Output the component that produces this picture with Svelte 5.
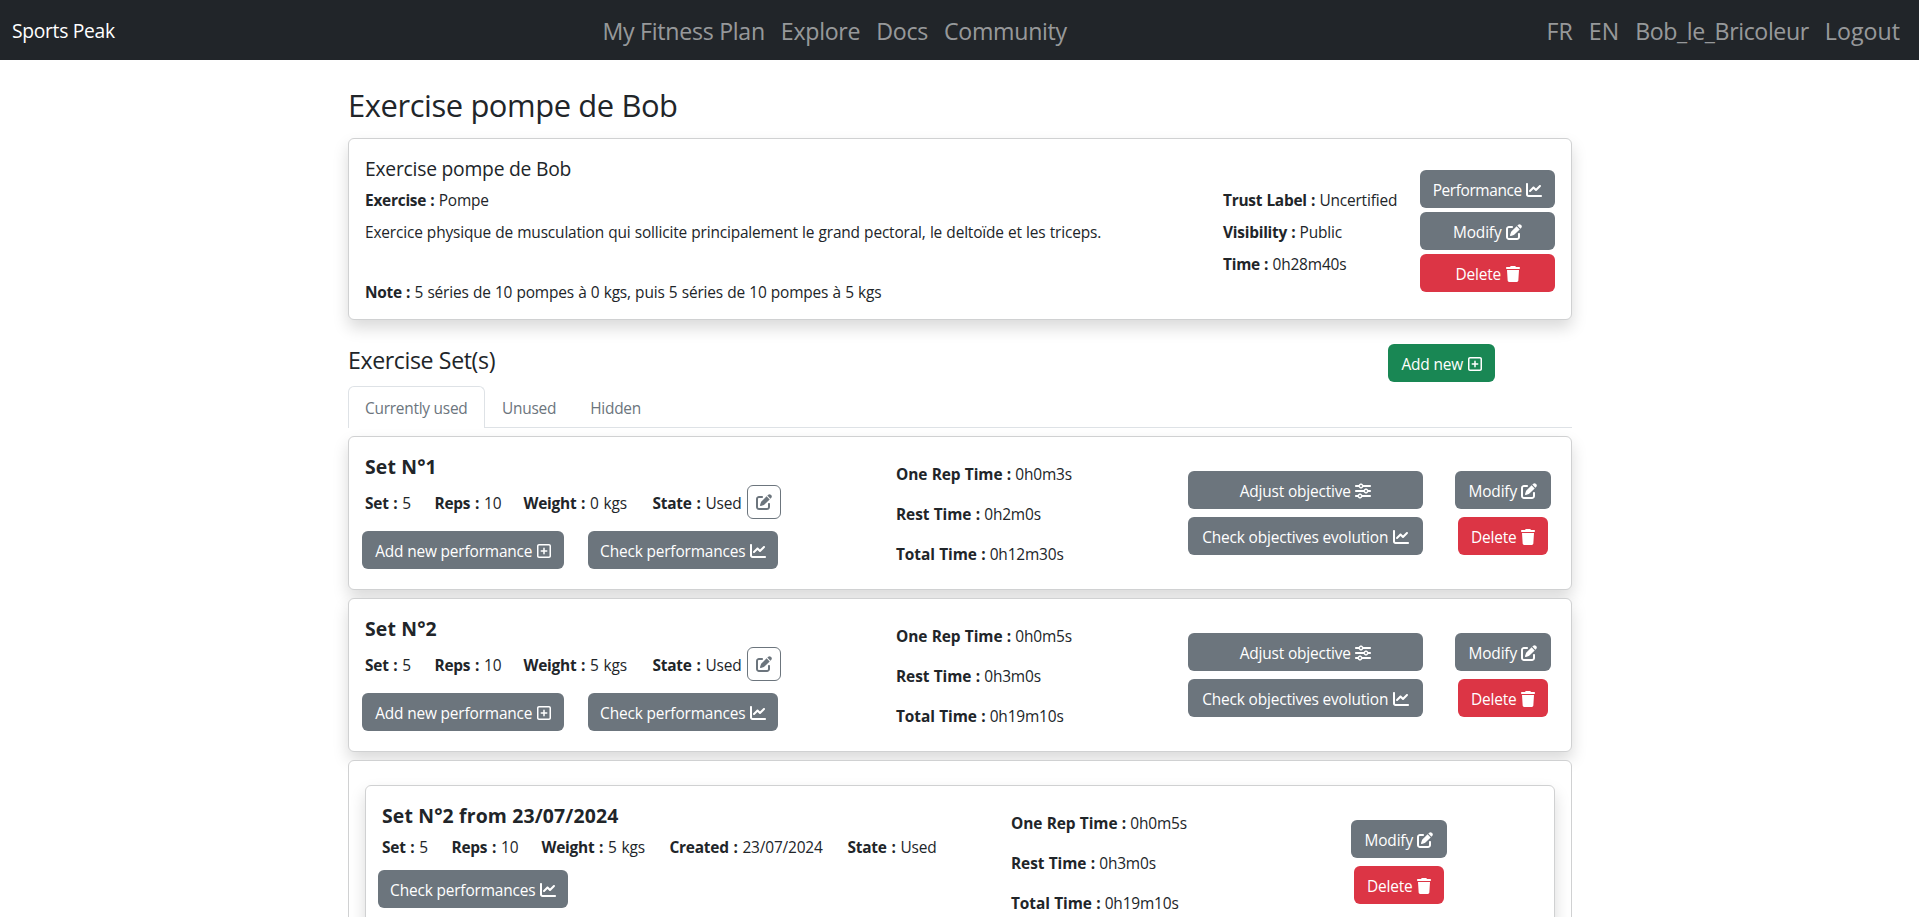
<script>
  const icons = {
    chart: { w: 512, d: 'M64 64c0-17.7-14.3-32-32-32S0 46.3 0 64V400c0 44.2 35.8 80 80 80H480c17.7 0 32-14.3 32-32s-14.3-32-32-32H80c-8.8 0-16-7.2-16-16V64zm406.6 86.6c12.5-12.5 12.5-32.8 0-45.3s-32.8-12.5-45.3 0L320 210.7l-57.4-57.4c-12.5-12.5-32.8-12.5-45.3 0l-112 112c-12.5 12.5-12.5 32.8 0 45.3s32.8 12.5 45.3 0L240 221.3l57.4 57.4c12.5 12.5 32.8 12.5 45.3 0l128-128z' },
    edit: { w: 512, d: 'M471.6 21.7c-21.9-21.9-57.3-21.9-79.2 0L362.3 51.7l97.9 97.9 30.1-30.1c21.9-21.9 21.9-57.3 0-79.2L471.6 21.7zm-299.2 220c-6.1 6.1-10.8 13.6-13.5 21.9l-29.6 88.8c-2.9 8.6-.6 18.1 5.8 24.6s15.9 8.7 24.6 5.8l88.8-29.6c8.2-2.7 15.7-7.4 21.9-13.5L437.7 172.3 339.7 74.3 172.4 241.7zM96 64C43 64 0 107 0 160V416c0 53 43 96 96 96H352c53 0 96-43 96-96V320c0-17.7-14.3-32-32-32s-32 14.3-32 32v96c0 17.7-14.3 32-32 32H96c-17.7 0-32-14.3-32-32V160c0-17.7 14.3-32 32-32h96c17.7 0 32-14.3 32-32s-14.3-32-32-32H96z' },
    trash: { w: 448, d: 'M135.2 17.7L128 32H32C14.3 32 0 46.3 0 64S14.3 96 32 96H416c17.7 0 32-14.3 32-32s-14.3-32-32-32H320l-7.2-14.3C307.4 6.8 296.3 0 284.2 0H163.8c-12.1 0-23.2 6.8-28.6 17.7zM416 128H32L53.2 467c1.6 25.3 22.6 45 47.9 45H346.9c25.3 0 46.3-19.7 47.9-45L416 128z' },
    plus: { w: 448, d: 'M64 80c-8.8 0-16 7.2-16 16V416c0 8.8 7.2 16 16 16H384c8.8 0 16-7.2 16-16V96c0-8.8-7.2-16-16-16H64zM0 96C0 60.7 28.7 32 64 32H384c35.3 0 64 28.7 64 64V416c0 35.3-28.7 64-64 64H64c-35.3 0-64-28.7-64-64V96zM200 344V280H136c-13.3 0-24-10.7-24-24s10.7-24 24-24h64V168c0-13.3 10.7-24 24-24s24 10.7 24 24v64h64c13.3 0 24 10.7 24 24s-10.7 24-24 24H248v64c0 13.3-10.7 24-24 24s-24-10.7-24-24z' },
    sliders: { w: 512, d: 'M0 416c0 17.7 14.3 32 32 32l54.7 0c12.3 28.3 40.5 48 73.3 48s61-19.7 73.3-48L480 448c17.7 0 32-14.3 32-32s-14.3-32-32-32l-246.7 0c-12.3-28.3-40.5-48-73.3-48s-61 19.7-73.3 48L32 384c-17.7 0-32 14.3-32 32zm128 0a32 32 0 1 1 64 0 32 32 0 1 1 -64 0zM320 256a32 32 0 1 1 64 0 32 32 0 1 1 -64 0zm32-80c-32.8 0-61 19.7-73.3 48L32 224c-17.7 0-32 14.3-32 32s14.3 32 32 32l246.7 0c12.3 28.3 40.5 48 73.3 48s61-19.7 73.3-48l54.7 0c17.7 0 32-14.3 32-32s-14.3-32-32-32l-54.7 0c-12.3-28.3-40.5-48-73.3-48zM192 128a32 32 0 1 1 0-64 32 32 0 1 1 0 64zm73.3-64C253 35.7 224.8 16 192 16s-61 19.7-73.3 48L32 64C14.3 64 0 78.3 0 96s14.3 32 32 32l86.7 0c12.3 28.3 40.5 48 73.3 48s61-19.7 73.3-48L480 128c17.7 0 32-14.3 32-32s-14.3-32-32-32L265.3 64z' }
  };

  const sets = [
    { title: 'Set N°1', weight: '0 kgs', rep: '0h0m3s', rest: '0h2m0s', total: '0h12m30s' },
    { title: 'Set N°2', weight: '5 kgs', rep: '0h0m5s', rest: '0h3m0s', total: '0h19m10s' }
  ];
  const past = { title: 'Set N°2 from 23/07/2024', weight: '5 kgs', rep: '0h0m5s', rest: '0h3m0s', total: '0h19m10s' };
</script>

{#snippet icon(name)}
  <svg class="icon" viewBox="0 0 {icons[name].w} 512" width={icons[name].w / 32} height="16" aria-hidden="true"><path d={icons[name].d} /></svg>
{/snippet}

{#snippet btn(label, name, kind)}
  <button type="button" class="btn {kind}"><span>{label}</span>{@render icon(name)}</button>
{/snippet}

{#snippet field(label, value)}
  <div class="field"><b>{label} :</b> {value}</div>
{/snippet}

{#snippet times(s)}
  <div class="times">
    {@render field('One Rep Time', s.rep)}
    {@render field('Rest Time', s.rest)}
    {@render field('Total Time', s.total)}
  </div>
{/snippet}

<div class="page">
  <nav class="navbar">
    <a class="brand" href="#home">Sports Peak</a>
    <div class="links">
      <a href="#plan">My Fitness Plan</a>
      <a href="#explore">Explore</a>
      <a href="#docs">Docs</a>
      <a href="#community">Community</a>
    </div>
    <div class="links account">
      <a href="#fr">FR</a>
      <a href="#en">EN</a>
      <a class="user" href="#profile">Bob_le_Bricoleur</a>
      <a href="#logout">Logout</a>
    </div>
  </nav>

  <main>
    <h1>Exercise pompe de Bob</h1>

    <section class="card summary">
      <div>
        <h5 class="light">Exercise pompe de Bob</h5>
        {@render field('Exercise', 'Pompe')}
        <div class="field description">Exercice physique de musculation qui sollicite principalement le grand pectoral, le deltoïde et les triceps.</div>
        {@render field('Note', '5 séries de 10 pompes à 0 kgs, puis 5 séries de 10 pompes à 5 kgs')}
      </div>
      <div class="labels">
        {@render field('Trust Label', 'Uncertified')}
        {@render field('Visibility', 'Public')}
        {@render field('Time', '0h28m40s')}
      </div>
      <div class="stack tight">
        {@render btn('Performance', 'chart', 'grey snug')}
        {@render btn('Modify', 'edit', 'grey')}
        {@render btn('Delete', 'trash', 'red')}
      </div>
    </section>

    <div class="sets-head">
      <h2>Exercise Set(s)</h2>
      {@render btn('Add new', 'plus', 'green')}
    </div>

    <div class="tabs">
      <a class="tab active" href="#used">Currently used</a>
      <a class="tab" href="#unused">Unused</a>
      <a class="tab" href="#hidden">Hidden</a>
    </div>

    {#each sets as s}
      <section class="card set">
        <div>
          <h5>{s.title}</h5>
          <div class="facts">
            {@render field('Set', '5')}
            {@render field('Reps', '10')}
            {@render field('Weight', s.weight)}
            {@render field('State', 'Used')}
            <button type="button" class="outline" aria-label="State">{@render icon('edit')}</button>
          </div>
          <div class="actions">
            {@render btn('Add new performance', 'plus', 'grey add')}
            {@render btn('Check performances', 'chart', 'grey check')}
          </div>
        </div>
        {@render times(s)}
        <div class="stack">
          {@render btn('Adjust objective', 'sliders', 'grey')}
          {@render btn('Check objectives evolution', 'chart', 'grey')}
        </div>
        <div class="stack manage">
          {@render btn('Modify', 'edit', 'grey modify')}
          {@render btn('Delete', 'trash', 'red delete')}
        </div>
      </section>
    {/each}

    <section class="history">
      <div class="card set past">
        <div>
          <h5>{past.title}</h5>
          <div class="facts">
            {@render field('Set', '5')}
            {@render field('Reps', '10')}
            {@render field('Weight', past.weight)}
            {@render field('Created', '23/07/2024')}
            {@render field('State', 'Used')}
          </div>
          <div class="actions">
            {@render btn('Check performances', 'chart', 'grey check')}
          </div>
        </div>
        {@render times(past)}
        <div class="stack manage">
          {@render btn('Modify', 'edit', 'grey modify')}
          {@render btn('Delete', 'trash', 'red delete')}
        </div>
      </div>
    </section>
  </main>
</div>

<style>
  :global(body) {
    margin: 0;
    background: #fff;
  }
  .page {
    height: 100vh;
    overflow: hidden;
    font: 400 15.45px/24px 'Open Sans', 'Noto Sans', sans-serif;
    letter-spacing: -0.011em;
    color: #212529;
  }
  .page *,
  .page *::before {
    box-sizing: border-box;
  }
  a {
    text-decoration: none;
    white-space: nowrap;
  }

  .navbar {
    display: flex;
    align-items: center;
    height: 60px;
    padding: 0 19px 0 12px;
    background: #212529;
  }
  .brand {
    width: 590.5px;
    padding-top: 1px;
    font-size: 19.3px;
    line-height: 30px;
    letter-spacing: -0.016em;
    color: #fff;
  }
  .links {
    display: flex;
    gap: 16px;
    padding-top: 1px;
    font-size: 23.15px;
    line-height: 36px;
    letter-spacing: -0.012em;
  }
  .links a {
    color: rgba(255, 255, 255, 0.55);
  }
  .account {
    margin-left: auto;
    letter-spacing: 0.002em;
  }
  .links .user {
    letter-spacing: -0.017em;
  }

  main {
    width: 1224px;
    margin-left: 348px;
  }
  h1,
  h2,
  h5 {
    margin: 0;
    font-weight: 400;
  }
  h1 {
    height: 78px;
    padding-top: 26px;
    font-size: 30.9px;
    line-height: 38px;
    letter-spacing: -0.013em;
  }
  h2 {
    width: 1040px;
    padding-top: 2px;
    font-size: 23.15px;
    line-height: 29px;
    letter-spacing: -0.017em;
  }
  h5 {
    height: 33px;
    padding-top: 2px;
    font-size: 19.4px;
    line-height: 24px;
    font-weight: 700;
    letter-spacing: 0.008em;
  }
  h5.light {
    font-size: 19.3px;
    font-weight: 400;
    letter-spacing: -0.012em;
  }

  .card {
    display: grid;
    align-items: start;
    padding: 16px;
    background: #fff;
    border: 1px solid #d0d1d2;
    border-radius: 6px;
    box-shadow: 0 8px 16px rgba(0, 0, 0, 0.15);
  }
  .field {
    white-space: nowrap;
    word-spacing: 0.4px;
  }
  b {
    font-weight: 700;
    letter-spacing: -0.016em;
  }

  .summary {
    grid-template-columns: 858px 197px 135px;
    height: 182px;
  }
  .summary .field {
    margin-bottom: 8px;
  }
  .summary .description {
    margin-bottom: 36px;
  }
  .labels {
    padding-top: 33px;
  }
  .summary .stack {
    padding-top: 15px;
  }

  .stack {
    display: flex;
    flex-direction: column;
    gap: 8px;
    padding-top: 18px;
  }
  .stack.tight {
    gap: 4px;
  }
  .manage {
    align-items: center;
  }

  .btn {
    display: flex;
    justify-content: center;
    align-items: center;
    gap: 4.5px;
    height: 38px;
    padding: 0;
    border: 0;
    border-radius: 6px;
    font: inherit;
    letter-spacing: -0.011em;
    white-space: nowrap;
    color: #fff;
  }
  .btn span {
    padding-top: 2px;
  }
  .btn .icon {
    margin-top: 2px;
  }
  .btn.snug {
    letter-spacing: -0.026em;
  }
  .grey {
    background: #6c757d;
  }
  .red {
    background: #dc3545;
  }
  .green {
    width: 107px;
    background: #198754;
  }
  .add {
    width: 202px;
  }
  .check {
    width: 190px;
  }
  .modify {
    width: 96px;
  }
  .delete {
    width: 90px;
  }
  .icon {
    display: block;
    flex: none;
    fill: currentColor;
  }

  .sets-head {
    display: flex;
    align-items: flex-start;
    height: 38px;
    margin: 24px 0 4px;
  }
  .tabs {
    display: flex;
    height: 42px;
    margin-bottom: 8px;
    border-bottom: 1px solid #dee2e6;
    letter-spacing: -0.016em;
  }
  .tab {
    height: 42px;
    padding: 9px 16px 0;
    border: 1px solid transparent;
    border-bottom: 0;
    border-radius: 6px 6px 0 0;
    color: #6c757d;
  }
  .tab.active {
    width: 137px;
    border-color: #dee2e6;
    background: #fff;
  }

  .set {
    grid-template-columns: 531px 292px 235px 32px 96px;
    height: 154px;
    margin-bottom: 8px;
  }
  .set .manage {
    grid-column: 5;
  }
  .facts {
    display: grid;
    grid-template-columns: 69.5px 89px 129px 94px 34px;
    align-items: center;
    height: 34px;
    margin: -1px 0 12px;
  }
  .facts .field {
    padding-top: 1px;
    word-spacing: 1px;
  }
  .outline {
    display: flex;
    align-items: center;
    justify-content: center;
    width: 34px;
    height: 34px;
    padding: 0;
    border: 1px solid #6c757d;
    border-radius: 6px;
    background: #fff;
    color: #6c757d;
  }
  .actions {
    display: flex;
    gap: 24px;
    margin-left: -3px;
  }
  .times {
    display: flex;
    flex-direction: column;
    gap: 16px;
    padding-top: 9px;
  }
  .times b {
    letter-spacing: -0.005em;
  }

  .history {
    padding: 24px 16px;
    border: 1px solid #d0d1d2;
    border-radius: 6px;
    background: #fff;
    position: relative;
  }
  .set.past {
    grid-template-columns: 629px 340px 96px;
    margin: 0;
  }
  .past .manage {
    grid-column: 3;
  }
  .past .facts {
    grid-template-columns: 69.5px 90px 128px 178px 90px;
    height: 24px;
    margin: 0 0 11px;
  }
  .past .facts .field {
    padding-top: 0;
  }
  .past .actions {
    margin-left: -4px;
  }
</style>
